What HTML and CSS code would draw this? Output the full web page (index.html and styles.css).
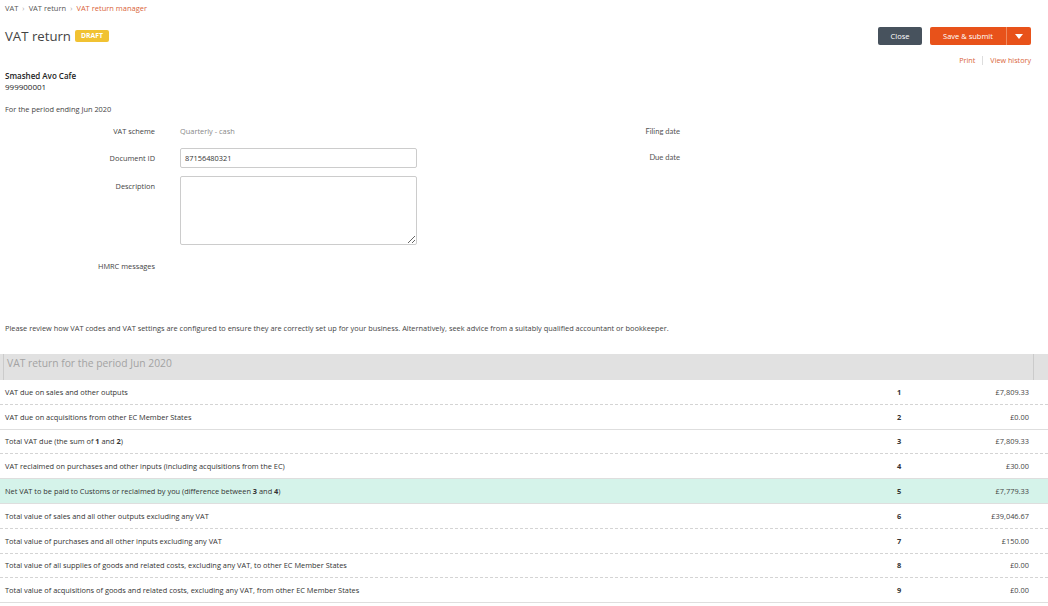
FILE: index.html
```html
<!DOCTYPE html>
<html lang="en">
<head>
    <meta charset="UTF-8">
    <title>VAT return</title>
    <link rel="stylesheet" href="styles.css">
</head>
<body>
    <div class="page">
        <div class="crumbs">
            <span>VAT</span><span class="sep">&rsaquo;</span><span>VAT return</span><span class="sep">&rsaquo;</span><span class="current">VAT return manager</span>
        </div>
        <div class="topbar">
            <h1 class="title">VAT return <span class="badge">DRAFT</span></h1>
            <div class="actions">
                <div class="buttons">
                    <button class="btn btnClose">Close</button>
                    <div class="split">
                        <button class="btn btnSave">Save &amp; submit</button>
                        <button class="btn btnCaret"><svg width="8" height="5" viewBox="0 0 8 5"><path d="M0 0h8L4 5z" fill="#fff"/></svg></button>
                    </div>
                </div>
                <div class="links"><a>Print</a><span class="bar"></span><a>View history</a></div>
            </div>
        </div>

        <div class="company">
            <div class="name">Smashed Avo Cafe</div>
            <div>999900001</div>
        </div>
        <p class="period">For the period ending Jun 2020</p>

        <div class="forms">
            <div class="form formLeft">
                <label>VAT scheme</label><div class="value">Quarterly - cash</div>
                <label>Document ID</label><div><input class="input" value="87156480321"></div>
                <label class="top">Description</label><div><textarea class="area"></textarea></div>
                <label class="hmrc">HMRC messages</label><div></div>
            </div>
            <div class="form formRight">
                <label class="alt">Filing date</label><div class="value"></div>
                <label class="alt">Due date</label><div class="value"></div>
            </div>
        </div>

        <p class="notice">Please review how VAT codes and VAT settings are configured to ensure they are correctly set up for your business. Alternatively, seek advice from a suitably qualified accountant or bookkeeper.</p>
    </div>

    <div class="return">
        <div class="head">
            <div class="headCell">VAT return for the period Jun 2020</div>
            <div class="headGutter"></div>
        </div>
        <div class="row dash"><span class="desc">VAT due on sales and other outputs</span><b class="box">1</b><span class="amt">&pound;7,809.33</span></div>
        <div class="row"><span class="desc">VAT due on acquisitions from other EC Member States</span><b class="box">2</b><span class="amt">&pound;0.00</span></div>
        <div class="row dash"><span class="desc">Total VAT due (the sum of <b>1</b> and <b>2</b>)</span><b class="box">3</b><span class="amt">&pound;7,809.33</span></div>
        <div class="row"><span class="desc">VAT reclaimed on purchases and other inputs (including acquisitions from the EC)</span><b class="box">4</b><span class="amt">&pound;30.00</span></div>
        <div class="row net"><span class="desc">Net VAT to be paid to Customs or reclaimed by you (difference between <b>3</b> and <b>4</b>)</span><b class="box">5</b><span class="amt">&pound;7,779.33</span></div>
        <div class="row dash"><span class="desc">Total value of sales and all other outputs excluding any VAT</span><b class="box">6</b><span class="amt">&pound;39,046.67</span></div>
        <div class="row dash"><span class="desc">Total value of purchases and all other inputs excluding any VAT</span><b class="box">7</b><span class="amt">&pound;150.00</span></div>
        <div class="row dash"><span class="desc">Total value of all supplies of goods and related costs, excluding any VAT, to other EC Member States</span><b class="box">8</b><span class="amt">&pound;0.00</span></div>
        <div class="row"><span class="desc">Total value of acquisitions of goods and related costs, excluding any VAT, from other EC Member States</span><b class="box">9</b><span class="amt">&pound;0.00</span></div>
    </div>
</body>
</html>
```

FILE: styles.css
```css
* { margin: 0; padding: 0; box-sizing: border-box; }

body {
    font-family: "Open Sans", "Liberation Sans", sans-serif;
    font-size: 7.4px;
    color: #444;
    background: #fff;
}

.page { padding: 3px 17px 0 5px; }

/* breadcrumb */
.crumbs { font-size: 7.5px; line-height: 11px; color: #555; }
.crumbs .sep { color: #aaa; margin: 0 4px; }
.crumbs .current { color: #d9643a; }

/* title + actions */
.topbar { display: flex; justify-content: space-between; align-items: flex-start; margin-top: 13px; }
.title { font-size: 13.2px; font-weight: 400; line-height: 18px; color: #444; display: flex; align-items: center; gap: 4px; }
.badge {
    background: #f1c232; color: #fff; font-size: 6.8px; font-weight: 700;
    padding: 0 6px; line-height: 12px; border-radius: 2px;
}
.actions { display: flex; flex-direction: column; align-items: flex-end; }
.buttons { display: flex; gap: 8px; }
.btn {
    border: 0; color: #fff; font-family: inherit; font-size: 7.5px;
    height: 18px; border-radius: 2px;
}
.btnClose { background: #47525d; width: 44px; }
.split { display: flex; }
.btnSave { background: #e8521a; width: 76px; border-radius: 2px 0 0 2px; }
.btnCaret {
    background: #e8521a; width: 25px; border-radius: 0 2px 2px 0;
    border-left: 1px solid #f08a5e; display: flex; align-items: center; justify-content: center;
}
.links { margin-top: 10px; display: flex; align-items: center; font-size: 7.2px; color: #d9643a; }
.bar { width: 1px; height: 9px; background: #ddd; margin: 0 7px; }

.company { margin-top: 5px; line-height: 11px; color: #222; font-size: 8px; }
.company .name { font-weight: 600; }
.period { margin-top: 12px; line-height: 11px; }

/* form */
.forms { display: flex; margin-top: 7px; }
.form {
    display: grid; grid-template-columns: 150px 237px;
    column-gap: 25px; row-gap: 8px; align-items: center;
}
.form label { text-align: right; line-height: 18px; }
.form label.top { align-self: start; line-height: 20px; }
.form .value { color: #888; line-height: 18px; }
.formLeft .hmrc { margin-top: 4px; }
.formRight { margin-left: 83px; grid-template-columns: 180px 200px; align-self: start; }
.alt { font-family: Lato, "Open Sans", sans-serif; font-size: 7.6px; color: #555; }
.input {
    width: 237px; height: 20px; border: 1px solid #ccc; border-radius: 2px;
    font-family: inherit; font-size: 7.4px; color: #333; padding: 0 4px;
}
.area {
    display: block; width: 237px; height: 69px; border: 1px solid #ccc; border-radius: 2px;
    font-family: inherit; resize: vertical;
}

.notice { margin-top: 48px; line-height: 11px; }

/* VAT return table */
.return { margin-top: 20px; }
.head { display: flex; height: 26px; background: #e1e1e1; padding-left: 3px; }
.headCell {
    flex: 1; border-left: 1px solid #cbcbcb; font-size: 10.3px; color: #a3a3a3;
    line-height: 19px; padding-left: 3px;
}
.headGutter { width: 15px; border-left: 1px solid #cbcbcb; }
.row {
    display: flex; align-items: center; height: 24.8px;
    border-bottom: 1px solid #dedede; padding: 0 19px 0 5px;
}
.row.dash { border-bottom: 1px dashed #d4d4d4; }
.row.net { background: #d5f3ea; }
.desc { flex: 1; color: #333; }
.desc b { font-weight: 700; }
.box { width: 40px; text-align: center; margin-right: 20px; font-weight: 700; color: #333; }
.amt { width: 90px; text-align: right; }
```
